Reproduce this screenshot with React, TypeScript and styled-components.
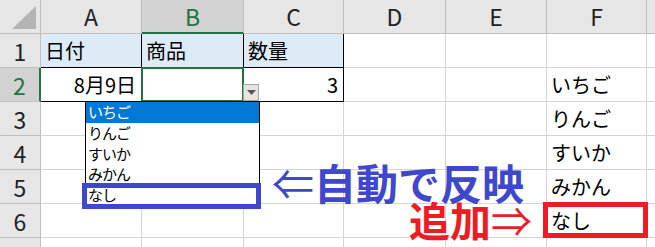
import React from 'react';
import styled, { createGlobalStyle } from 'styled-components';

const GlobalStyle = createGlobalStyle`
  html, body {
    margin: 0;
    padding: 0;
    background: #fff;
    overflow: hidden;
  }
  body {
    font-family: "Noto Sans CJK JP", "Noto Sans", sans-serif;
    color: #000;
  }
`;

const columns = ['A', 'B', 'C', 'D', 'E', 'F', ''];
const selectedCol = 1;
const selectedRow = 2;

// rows 1..7, columns A..G
const data: string[][] = [
  ['日付', '商品', '数量', '', '', '', ''],
  ['8月9日', '', '3', '', '', 'いちご', ''],
  ['', '', '', '', '', 'りんご', ''],
  ['', '', '', '', '', 'すいか', ''],
  ['', '', '', '', '', 'みかん', ''],
  ['', '', '', '', '', 'なし', ''],
  ['', '', '', '', '', '', ''],
];

const choices = ['いちご', 'りんご', 'すいか', 'みかん', 'なし'];

export default function App() {
  return (
    <>
      <GlobalStyle />
      <Sheet>
        <Grid>
          <Corner>
            <svg width="41" height="34" viewBox="0 0 41 34">
              <polygon points="36,6 36,29 12,29" fill="#b4b4b4" />
            </svg>
          </Corner>
          {columns.map((c, i) => (
            <ColHeader key={c + i} $selected={i === selectedCol}>
              {c}
            </ColHeader>
          ))}
          {data.map((row, r) => (
            <React.Fragment key={r}>
              <RowHeader $selected={r + 1 === selectedRow}>{r + 1}</RowHeader>
              {row.map((v, c) => {
                const inTable = r < 2 && c < 3;
                return (
                  <Cell
                    key={c}
                    $table={inTable}
                    $fill={r === 0 && c < 3}
                    $align={r === 1 && (c === 0 || c === 2) ? 'right' : 'left'}
                    $active={r + 1 === selectedRow && c === selectedCol}
                  >
                    {v}
                  </Cell>
                );
              })}
            </React.Fragment>
          ))}
        </Grid>

        <DropButton>
          <svg width="9" height="5" viewBox="0 0 9 5">
            <polygon points="0,0 9,0 4.5,5" fill="#555" />
          </svg>
        </DropButton>

        <ListBox>
          {choices.map((c, i) => (
            <ListItem key={c} $active={i === 0}>
              {c}
            </ListItem>
          ))}
        </ListBox>

        <MarkBox $color="#3f48cc" $left={82} $top={183} $w={179} $h={26} />
        <MarkBox $color="#ed1c24" $left={543} $top={202} $w={105} $h={36} />

        <Label $color="#3f48cc" $left={272} $top={161} $size={42}>
          <Arrow>⇐</Arrow>自動で反映
        </Label>
        <Label $color="#ed1c24" $left={409} $top={199} $size={41}>
          追加<Arrow>⇒</Arrow>
        </Label>
      </Sheet>
    </>
  );
}

const Sheet = styled.div`
  position: relative;
  width: 655px;
  height: 247px;
  overflow: hidden;
`;

const Grid = styled.div`
  display: grid;
  grid-template-columns: 41px 101px 102px 100px 102px 101px 100px 1fr;
  grid-auto-rows: 34px;
`;

const Corner = styled.div`
  background: #e6e6e6;
  border-right: 1px solid #bfbfbf;
  border-bottom: 1px solid #bfbfbf;
  box-sizing: border-box;
  svg {
    display: block;
  }
`;

const ColHeader = styled.div<{ $selected?: boolean }>`
  box-sizing: border-box;
  display: flex;
  align-items: center;
  justify-content: center;
  padding-bottom: ${(p) => (p.$selected ? '1px' : '2px')};
  background: ${(p) => (p.$selected ? '#d2d2d2' : '#e6e6e6')};
  color: ${(p) => (p.$selected ? '#217346' : '#222')};
  border-right: 1px solid #bfbfbf;
  border-bottom: ${(p) => (p.$selected ? '2px solid #217346' : '1px solid #bfbfbf')};
  font-size: 23px;
`;

const RowHeader = styled.div<{ $selected?: boolean }>`
  box-sizing: border-box;
  display: flex;
  align-items: center;
  justify-content: center;
  background: ${(p) => (p.$selected ? '#d2d2d2' : '#e6e6e6')};
  color: ${(p) => (p.$selected ? '#217346' : '#222')};
  border-right: ${(p) => (p.$selected ? '2px solid #217346' : '1px solid #bfbfbf')};
  border-bottom: 1px solid #bfbfbf;
  font-size: 23px;
`;

const Cell = styled.div<{
  $table?: boolean;
  $fill?: boolean;
  $align: 'left' | 'right';
  $active?: boolean;
}>`
  position: relative;
  box-sizing: border-box;
  display: flex;
  align-items: center;
  justify-content: ${(p) => (p.$align === 'right' ? 'flex-end' : 'flex-start')};
  padding: 0 5px 1px 4px;
  background: ${(p) => (p.$fill ? '#ddebf7' : '#fff')};
  border-right: 1px solid ${(p) => (p.$table ? '#000' : '#d4d4d4')};
  border-bottom: 1px solid ${(p) => (p.$table ? '#000' : '#d4d4d4')};
  font-size: 20px;
  white-space: nowrap;

  ${(p) =>
    p.$active &&
    `
    &::after {
      content: '';
      position: absolute;
      left: -1px;
      top: -1px;
      right: -1px;
      bottom: -1px;
      border: 2px solid #217346;
    }
  `}
`;

const DropButton = styled.div`
  position: absolute;
  left: 243px;
  top: 84px;
  width: 16px;
  height: 17px;
  box-sizing: border-box;
  background: #e4e4e4;
  border: 1px solid #a6a6a6;
  display: flex;
  align-items: center;
  justify-content: center;
`;

const ListBox = styled.div`
  position: absolute;
  left: 85px;
  top: 101px;
  width: 175px;
  box-sizing: border-box;
  border: 1px solid #000;
  background: #fff;
  display: flex;
  flex-direction: column;
`;

const ListItem = styled.div<{ $active?: boolean }>`
  height: 20.8px;
  line-height: 20px;
  padding-left: 2px;
  font-size: 15px;
  letter-spacing: -1px;
  background: ${(p) => (p.$active ? '#0078d7' : '#fff')};
  color: ${(p) => (p.$active ? '#fff' : '#000')};
`;

const MarkBox = styled.div<{ $color: string; $left: number; $top: number; $w: number; $h: number }>`
  position: absolute;
  left: ${(p) => p.$left}px;
  top: ${(p) => p.$top}px;
  width: ${(p) => p.$w}px;
  height: ${(p) => p.$h}px;
  box-sizing: border-box;
  border: 5px solid ${(p) => p.$color};
`;

const Label = styled.div<{ $color: string; $left: number; $top: number; $size: number }>`
  position: absolute;
  left: ${(p) => p.$left}px;
  top: ${(p) => p.$top}px;
  font-size: ${(p) => p.$size}px;
  line-height: 1;
  font-weight: 700;
  color: ${(p) => p.$color};
  white-space: nowrap;
`;

const Arrow = styled.span`
  font-weight: 400;
`;
